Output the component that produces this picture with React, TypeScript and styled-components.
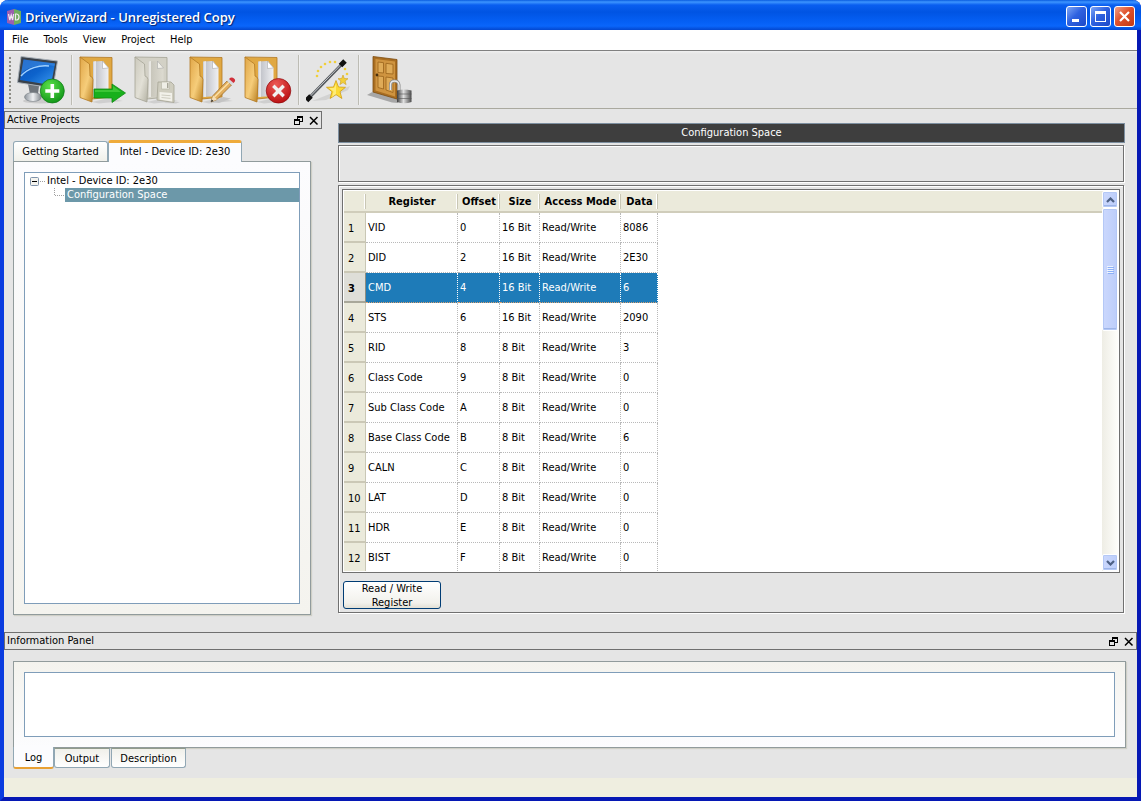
import React from "react";
import styled, { createGlobalStyle, css } from "styled-components";

const Global = createGlobalStyle`
  * { box-sizing: border-box; }
  body {
    margin: 0;
    background: #fff;
    color: #000;
    font: 11px/14px "DejaVu Sans Condensed", "DejaVu Sans", Tahoma, sans-serif;
  }
  button, textarea { font: inherit; color: inherit; }
`;

const Window = styled.div`
  display: flex;
  flex-direction: column;
  height: 100vh;
  min-height: 600px;
  background: #e5e5e5;
  border: solid #0a2fd0;
  border-width: 0 4px 4px;
  border-color: #0a2fd0 #0618b4 #0618b4 #0a3ce0;
  border-radius: 8px 8px 0 0;
`;

const TitleBar = styled.header`
  display: flex;
  flex: none;
  align-items: center;
  gap: 3px;
  height: 30px;
  margin: 0 -4px;
  padding: 3px 6px 0;
  border-radius: 8px 8px 0 0;
  background: linear-gradient(#0a5ce0 0, #3d95ff 2px, #0a5ff0 5px, #0054e3 12px, #0560f5 22px, #0a66fb 26px, #0347cf 30px);
`;

const WindowTitle = styled.h1`
  flex: 1;
  margin: 0;
  color: #fff;
  font: 600 13px/18px "Open Sans", "Noto Sans", sans-serif;
  text-shadow: 1px 1px 1px #06236f;
`;

const CaptionButton = styled.button<{ $close?: boolean }>`
  display: flex;
  align-items: center;
  justify-content: center;
  width: 21px;
  height: 21px;
  padding: 0;
  border: 1px solid #fff;
  border-radius: 3px;
  background: ${(p) =>
    p.$close
      ? "linear-gradient(135deg, #f0a088, #e0512b 45%, #c23a12)"
      : "linear-gradient(135deg, #7ea6f5, #2f62e0 45%, #1c48c8)"};
`;

const MenuBar = styled.nav`
  display: flex;
  flex: none;
  height: 20px;
  background: #fff;
`;

const MenuItem = styled.button`
  padding: 0 7px 0 8px;
  border: 0;
  background: none;
`;

const ToolBar = styled.div`
  display: flex;
  flex: none;
  align-items: center;
  height: 59px;
  padding: 0 5px;
  border-top: 1px solid #808080;
  border-bottom: 1px solid #aaa99f;
  background: linear-gradient(#f0f0f0, #e5e5e5 3px);
`;

const Grip = styled.span`
  width: 2px;
  height: 46px;
  margin-right: 6px;
  background: repeating-linear-gradient(#8d8d86 0 2px, transparent 2px 4px);
`;

const ToolGroup = styled.div`
  display: flex;
  gap: 7px;
`;

const ToolSeparator = styled.span`
  width: 2px;
  height: 50px;
  margin: 0 6px;
  border-left: 1px solid #bdbcb4;
  border-right: 1px solid #efefef;
`;

const ToolButton = styled.button`
  padding: 0;
  border: 0;
  background: none;
  svg { display: block; }
`;

const Workspace = styled.div`
  display: flex;
  flex: 1;
  min-height: 0;
  gap: 16px;
`;

const ProjectsDock = styled.aside`
  display: flex;
  flex: none;
  flex-direction: column;
  width: 318px;
  padding: 2px 0 17px;
`;

const DockTitle = styled.div`
  display: flex;
  flex: none;
  align-items: center;
  gap: 4px;
  height: 18px;
  padding: 0 2px;
  border: 1px solid #6f6f6f;
  h2 { flex: 1; margin: 0; font: inherit; }
`;

const DockButton = styled.button`
  width: 11px;
  height: 12px;
  padding: 0;
  border: 0;
  background: none;
  svg { display: block; }
`;

const TabRow = styled.div`
  display: flex;
  flex: none;
  align-items: flex-end;
  height: 21px;
  margin: 11px 9px 0;
`;

const BottomTabRow = styled(TabRow)`
  align-items: flex-start;
  height: 30px;
  margin: 0 9px;
`;

const Tab = styled.button<{ $width: number; $active?: boolean; $bottom?: boolean }>`
  width: ${(p) => p.$width}px;
  height: 20px;
  padding: 0;
  border: 1px solid #91a7b4;
  background: linear-gradient(#fff, #f0f0ea);
  ${(p) =>
    p.$bottom
      ? css`
          margin-right: 1px;
          border-top-color: #919b8c;
          border-radius: 0 0 3px 3px;
          padding-top: 2px;
          background: linear-gradient(#f0f0ea, #fff);
        `
      : css`
          padding-top: 1px;
          border-bottom: 0;
          border-radius: 3px 3px 0 0;
        `}
  ${(p) =>
    p.$active &&
    (p.$bottom
      ? css`
          height: 22px;
          margin: -1px 0 0;
          border-top: 0;
          border-bottom: 2px solid #e8a033;
          background: #fcfcfe;
        `
      : css`
          position: relative;
          height: 22px;
          margin-bottom: -1px;
          padding: 0 0 2px;
          border-top: 3px solid #efab3c;
          background: #fcfcfe;
        `)}
`;

const TabPanel = styled.section`
  display: flex;
  flex: 1;
  min-height: 0;
  margin: 0 11px 0 9px;
  padding: 10px;
  border: 1px solid #919b9c;
  box-shadow: 1px 1px 1px #cfcfc6;
  background: linear-gradient(#fcfcfe, #f4f3ee);
`;

const Tree = styled.ul`
  flex: 1;
  margin: 0;
  padding: 1px 0 0;
  border: 1px solid #7f9db9;
  background: #fff;
  list-style: none;
  ul { margin: 0; padding: 0 0 0 29px; list-style: none; }
`;

const TreeRow = styled.div`
  display: flex;
  align-items: center;
  height: 14px;
  svg { flex: none; }
`;

const TreeLabel = styled.span<{ $selected?: boolean }>`
  flex: 1;
  padding: 0 2px;
  ${(p) => p.$selected && "background: #6c98a9; color: #fff;"}
`;

const Content = styled.main`
  display: flex;
  flex: 1;
  flex-direction: column;
  min-width: 0;
  padding: 14px 12px 19px 0;
`;

const ContentTitle = styled.h2`
  flex: none;
  height: 20px;
  margin: 0 0 2px;
  border: 1px solid #7d8fa0;
  background: #3e3e3e;
  color: #fff;
  font: inherit;
  line-height: 18px;
  text-align: center;
`;

const Frame = styled.div`
  border: 1px solid #707070;
  box-shadow: 1px 1px 0 #fff, inset 1px 1px 0 #fff;
  margin-right: 1px;
`;

const EmptyFrame = styled(Frame)`
  flex: none;
  height: 37px;
  margin-bottom: 3px;
`;

const RegisterFrame = styled(Frame)`
  display: flex;
  flex: 1;
  flex-direction: column;
  align-items: flex-start;
  min-height: 0;
  padding: 3px;
`;

const TableView = styled.div`
  display: flex;
  flex: 1;
  align-self: stretch;
  min-height: 0;
  padding: 1px;
  border: 1px solid #707070;
  background: #fff;
`;

const TableScroll = styled.div`
  flex: 1;
  min-width: 0;
  overflow: hidden;
`;

const RegisterTable = styled.table`
  width: 100%;
  table-layout: fixed;
  border-collapse: separate;
  border-spacing: 0;
  th, td { padding: 0; white-space: nowrap; overflow: hidden; }
`;

const ColumnHead = styled.th`
  height: 22px;
  padding-top: 2px !important;
  border-bottom: 2px solid #d0cdbb;
  background: linear-gradient(to left, #c9c7b5 1px, #fff 1px 2px, transparent 2px) 0 3px / 100% 15px no-repeat #ebeadb;
  &:last-child { background: #ebeadb; }
`;

const RowHead = styled.th<{ $active?: boolean }>`
  height: 30px;
  padding-top: 3px !important;
  border-right: 1px solid ${(p) => (p.$active ? "#8e8d80" : "#c9c7b5")};
  border-bottom: 2px solid ${(p) => (p.$active ? "#a9a89a" : "#cbc8b6")};
  background: ${(p) => (p.$active ? "#deded8" : "#ebeadb")};
  font-weight: ${(p) => (p.$active ? "bold" : "normal")};
  text-align: left;
  text-indent: 4px;
`;

const Cell = styled.td<{ $selected?: boolean }>`
  border-right: 1px dotted #b9b9b9;
  border-bottom: 1px dotted #b9b9b9;
  text-indent: 2px;
  ${(p) =>
    p.$selected &&
    "background: #1e7bb8; color: #fff; border-right-color: #fff; border-bottom-color: #d8a070;"}
`;

const ScrollBar = styled.div`
  display: flex;
  flex: none;
  flex-direction: column;
  width: 16px;
  background: linear-gradient(to right, #eeede5, #fefefb);
`;

const ScrollPart = styled.button<{ $size: number }>`
  display: flex;
  flex: none;
  align-items: center;
  justify-content: center;
  height: ${(p) => p.$size}px;
  padding: 0;
  border: 1px solid #fff;
  border-radius: 2px;
  box-shadow: inset 0 0 0 1px #b4c8f6, inset 0 -2px 0 #9db5e8;
  background: linear-gradient(to right, #cbd8fd, #bccdfa);
`;

const ScrollGap = styled.span`
  flex: 1;
`;

const ActionButton = styled.button`
  flex: none;
  width: 98px;
  height: 28px;
  margin: 8px 0 0 1px;
  padding: 0 12px;
  overflow: hidden;
  border: 1px solid #003c74;
  border-radius: 3px;
  background: linear-gradient(#fff, #f2f1ec 80%, #e3e0d5);
  line-height: 14px;
`;

const InfoDock = styled.footer`
  flex: none;
`;

const InfoPanel = styled(TabPanel)`
  height: 87px;
  margin-top: 11px;
  background: linear-gradient(#f4f3ee, #fcfcfe);
`;

const LogBox = styled.textarea`
  flex: 1;
  height: 65px;
  padding: 2px;
  border: 1px solid #7f9db9;
  outline: 0;
  background: #fff;
  resize: none;
`;

const StatusBar = styled.div`
  flex: none;
  height: 19px;
  background: #efeee0;
`;

/* ---------- icons ---------- */

const Svg = ({ children, x = 0, width = 48 }: { children: React.ReactNode; x?: number; width?: number }) => (
  <svg width={width} height="48" viewBox={`${x} 0 ${width} 48`} aria-hidden="true">
    {children}
  </svg>
);

const MonitorIcon = () => (
  <Svg>
    <defs>
      <linearGradient id="screen" x1="0" y1="0" x2="1" y2="1">
        <stop offset="0" stopColor="#0a4fb8" />
        <stop offset=".5" stopColor="#0d63cc" />
        <stop offset="1" stopColor="#3b9af0" />
      </linearGradient>
      <radialGradient id="green" cx=".4" cy=".3" r=".8">
        <stop offset="0" stopColor="#5be04a" />
        <stop offset="1" stopColor="#0a8f14" />
      </radialGradient>
      <linearGradient id="stand" x1="0" x2="1">
        <stop offset="0" stopColor="#8d949b" />
        <stop offset=".5" stopColor="#eef0f2" />
        <stop offset="1" stopColor="#7d8389" />
      </linearGradient>
    </defs>
    <ellipse cx="24" cy="45" rx="18" ry="2.500" fill="#cbcbcb" />
    <path d="M11 28 22 30 21 38H13z" fill="#70767c" />
    <ellipse cx="16" cy="41" rx="8.500" ry="4.500" fill="url(#stand)" stroke="#777d83" strokeWidth=".6" />
    <path d="M4 .5 40.500 5 36 32 .5 26.500z" fill="#3a4149" stroke="#a9b1b8" strokeWidth="1" />
    <path d="M6.500 3.500 38 7.500 34 29 3 24z" fill="url(#screen)" />
    <path d="M6.500 3.500 38 7.500 37.500 10C24 7 10 11 4 18z" fill="#4e9ae8" opacity=".45" />
    <path d="M4 20C11 12 22 9 32 10" fill="none" stroke="#9fd0ff" strokeWidth="1.500" />
    <circle cx="35.300" cy="35" r="12" fill="url(#green)" stroke="#0b7a12" strokeWidth=".7" />
    <path d="M35.300 28v14M28.300 35h14" stroke="#fff" strokeWidth="3.600" />
  </Svg>
);

const Folder = ({ id, grey }: { id: string; grey?: boolean }) => {
  const c = grey
    ? { back: "#d3d1c6", dark: "#b3b1a3", mid: "#cbc9bd", light: "#e2e0d6", edge: "#a5a396" }
    : { back: "#e0a842", dark: "#b98022", mid: "#e0a647", light: "#f6cd7a", edge: "#b27a24" };
  return (
    <>
      <defs>
        <linearGradient id={id} x1="0" y1="0" x2="1" y2="1">
          <stop offset="0" stopColor={c.mid} />
          <stop offset=".55" stopColor={c.light} />
          <stop offset="1" stopColor={c.dark} />
        </linearGradient>
        <linearGradient id={id + "p"} x1="0" x2="1">
          <stop offset="0" stopColor={grey ? "#c3c1b6" : "#b9bbc2"} />
          <stop offset="1" stopColor={grey ? "#dddbd1" : "#eff0f3"} />
        </linearGradient>
      </defs>
      <path d="M13 46 30 42 44 45 20 47.500z" fill="#cfcfcf" />
      <path d="M1 1 33 1.500V41L13 43z" fill={c.back} stroke={c.edge} strokeWidth=".8" />
      <path d="M14 5.500 24 5 29.500 12V40L14 41z" fill={`url(#${id}p)`} />
      <path d="M14.500 5.500 17 5V41L14.500 41z" fill="#fff" opacity=".6" />
      <path d="M23.500 5V12.500L29.500 12z" fill={grey ? "#f2f1ea" : "#fff"} stroke="#a8a8a8" strokeWidth=".6" />
      <path d="M1 1 10.500 8 11 20q3 1 3 3.500L13 46 1 41.500z" fill={`url(#${id})`} stroke={c.edge} strokeWidth=".8" />
    </>
  );
};

const OpenIcon = () => (
  <Svg>
    <Folder id="fo" />
    <path d="M15 33H33V28L46.500 37 33 46.500V42H15z" fill="#18b01c" stroke="#118a14" strokeWidth=".8" />
    <path d="M16 34H34V30L42 36H16z" fill="#5fdc50" opacity=".5" />
  </Svg>
);

const SaveIcon = () => (
  <Svg>
    <Folder id="fs" grey />
    <path d="M33 45 46 46 42 47.500 30 47z" fill="#cdcdcd" />
    <path d="M24 26H37L40 29V46.500L23 44z" fill="#cfcdbf" stroke="#a6a496" strokeWidth=".8" />
    <path d="M27.500 26h8v7h-8z" fill="#efeee6" stroke="#b3b1a3" strokeWidth=".6" />
    <path d="M33 27h1.500v5H33z" fill="#a6a496" />
    <path d="M25.500 36 38 37v8.500L25.500 43.500z" fill="#f2f1ea" />
    <path d="M27.500 39l9 .7M27.500 41.500l9 .9" stroke="#bdbbad" strokeWidth=".7" />
  </Svg>
);

const EditIcon = () => (
  <Svg>
    <Folder id="fe" />
    <path d="M24 46 34 41 42 42.500 30 47z" fill="#c4c4c4" />
    <path d="M22 46 24 39.500 38 25 42.500 29 28 43.500z" fill="#e2ad5c" stroke="#8f6220" strokeWidth=".7" />
    <path d="M25.500 41 40 26.500" stroke="#fbe2a8" strokeWidth="1.500" />
    <path d="M22 46 24 39.500 28 43.500z" fill="#f5dfb8" />
    <path d="M22 46 22.700 43.500 24.500 45z" fill="#222" />
    <path d="M38 25 40 23 44.500 27 42.500 29z" fill="#d6d9dc" />
    <path d="M40 23Q42.500 20.500 45 22.500T44.500 27z" fill="#d1303a" />
  </Svg>
);

const CloseProjectIcon = () => (
  <Svg>
    <Folder id="fc" />
    <defs>
      <radialGradient id="red" cx=".4" cy=".25" r=".8">
        <stop offset="0" stopColor="#ec5a56" />
        <stop offset="1" stopColor="#b80d10" />
      </radialGradient>
    </defs>
    <circle cx="34.500" cy="34.800" r="12.300" fill="url(#red)" stroke="#8f0c0e" strokeWidth=".7" />
    <path d="M30.500 31 38.500 39M38.500 31 30.500 39" stroke="#f1f1f1" strokeWidth="3.400" strokeLinecap="square" />
  </Svg>
);

const WandIcon = () => (
  <Svg x={2} width={46}>
    <path d="M8 45 46 30 44 34 22 44z" fill="#d2d2d2" />
    {[
      [13, 20], [14, 15], [17, 11], [21, 8], [26, 6], [31, 6], [41, 13], [43, 18],
    ].map(([x, y]) => (
      <circle key={x} cx={x} cy={y} r="1.300" fill="#f0cf3a" />
    ))}
    <path d="M4 43 40 6" stroke="#55595e" strokeWidth="3" />
    <path d="M4.500 42 39.500 6" stroke="#c3c7cb" strokeWidth="1" />
    <path d="M2.500 44.500 7 40M36.500 9.500 41 5" stroke="#111" strokeWidth="5" />
    <path d="M39 19l1.300 3.500 3.700.2-2.900 2.300 1 3.600-3.100-2-3.100 2 1-3.600-2.900-2.300 3.700-.2z" fill="#f2cf38" stroke="#cf9f1c" strokeWidth=".6" />
    <path d="M32 24.500l2.500 6.500 7 .3-5.500 4.400 1.900 6.800-5.900-3.900-5.900 3.900 1.900-6.800-5.500-4.400 7-.3z" fill="#fbd935" stroke="#d09d14" strokeWidth=".8" />
    <path d="M32 28v10l-4 3 1.500-5.500-4.500-3.500h5z" fill="#fff08a" opacity=".8" />
  </Svg>
);

const ExitIcon = () => (
  <Svg>
    <defs>
      <linearGradient id="lock" x1="0" x2="1">
        <stop offset="0" stopColor="#3d3d3d" />
        <stop offset=".45" stopColor="#e0e0e0" />
        <stop offset="1" stopColor="#4a4a4a" />
      </linearGradient>
    </defs>
    <path d="M1 39 8 35 32 43V47L26 46.500z" fill="#a7a7a7" />
    <path d="M7 .5 31 3.500V43L7 36z" fill="#a96e22" stroke="#7d4c10" strokeWidth=".8" />
    <path d="M9.500 3 29 5.500V40.500L9.500 34.500z" fill="#cf9440" />
    <path d="M12 6 17.500 6.700V17L12 16.500zM20 7.300 27 8.300V18L20 17.500zM12 20 17.500 20.500V33L12 31.500zM20 21 27 22V36.500L20 34z" fill="#dfab58" stroke="#a06a20" strokeWidth=".9" />
    <circle cx="11" cy="19" r="1.400" fill="#4a300c" />
    <path d="M24.500 34V29Q24.500 25 28.500 25T33 29V36" fill="none" stroke="#8b8b8b" strokeWidth="3" />
    <path d="M24.500 34V29Q24.500 25 28.500 25T33 29V36" fill="none" stroke="#e9e9e9" strokeWidth="1.400" />
    <path d="M31 34.500Q38 32.500 45.500 34.500V46Q38 48.500 31 46z" fill="url(#lock)" />
    <path d="M31 38h14.500M31 42.500h14.500" stroke="#555" strokeWidth=".6" />
  </Svg>
);

const AppIcon = () => (
  <svg width="16" height="16" viewBox="0 0 16 16" aria-hidden="true">
    <path d="M1 2 8 0V16L1 14z" fill="#9a5fb0" />
    <path d="M8 0 15 2V14L8 16z" fill="#6fae5e" />
    <path d="M2.500 5 3.800 11 5.200 6 6.600 11 7.600 5M9.500 5v6h1.200q2.300-.5 2.300-3T10.700 5z" fill="none" stroke="#f0eaf2" strokeWidth="1.200" />
  </svg>
);

const DockControls = () => (
  <>
    <DockButton aria-label="Float">
      <svg width="11" height="11" viewBox="0 0 11 11">
        <path d="M4 1h6v2H4zM4 1h1v3H4zM9 1h1v6H9zM7 6h3v1H7zM1 4h6v2H1zM1 4h1v6H1zM6 4h1v6H6zM1 9h6v1H1z" fill="#000" />
      </svg>
    </DockButton>
    <DockButton aria-label="Close">
      <svg width="11" height="11" viewBox="0 0 11 11">
        <path d="M2 2 9.500 9.500M9.500 2 2 9.500" stroke="#000" strokeWidth="1.500" />
      </svg>
    </DockButton>
  </>
);

const Chevron = ({ down }: { down?: boolean }) => (
  <svg width="9" height="6" viewBox="0 0 9 6" aria-hidden="true">
    <path d={down ? "M1 1 4.500 4.500 8 1" : "M1 5 4.500 1.500 8 5"} fill="none" stroke="#4d6185" strokeWidth="2.200" />
  </svg>
);

/* ---------- data ---------- */

const menus = ["File", "Tools", "View", "Project", "Help"];

const registers = [
  ["VID", "0", "16 Bit", "8086"],
  ["DID", "2", "16 Bit", "2E30"],
  ["CMD", "4", "16 Bit", "6"],
  ["STS", "6", "16 Bit", "2090"],
  ["RID", "8", "8 Bit", "3"],
  ["Class Code", "9", "8 Bit", "0"],
  ["Sub Class Code", "A", "8 Bit", "0"],
  ["Base Class Code", "B", "8 Bit", "6"],
  ["CALN", "C", "8 Bit", "0"],
  ["LAT", "D", "8 Bit", "0"],
  ["HDR", "E", "8 Bit", "0"],
  ["BIST", "F", "8 Bit", "0"],
];

const selectedRow = 2;

export default function App() {
  return (
    <>
      <Global />
      <Window>
        <TitleBar>
          <AppIcon />
          <WindowTitle>DriverWizard - Unregistered Copy</WindowTitle>
          <CaptionButton aria-label="Minimize">
            <svg width="13" height="13" viewBox="0 0 13 13"><path d="M2 9h7v3H2z" fill="#fff" /></svg>
          </CaptionButton>
          <CaptionButton aria-label="Maximize">
            <svg width="13" height="13" viewBox="0 0 13 13"><path d="M1 1h11v11H1zM2 4v7h9V4z" fill="#fff" fillRule="evenodd" /></svg>
          </CaptionButton>
          <CaptionButton aria-label="Close" $close>
            <svg width="13" height="13" viewBox="0 0 13 13"><path d="M2 2 11 11M11 2 2 11" stroke="#fff" strokeWidth="2.200" /></svg>
          </CaptionButton>
        </TitleBar>

        <MenuBar>
          {menus.map((m) => (
            <MenuItem key={m}>{m}</MenuItem>
          ))}
        </MenuBar>

        <ToolBar role="toolbar">
          <Grip />
          <ToolGroup>
            <ToolButton aria-label="New project"><MonitorIcon /></ToolButton>
          </ToolGroup>
          <ToolSeparator />
          <ToolGroup>
            <ToolButton aria-label="Open project"><OpenIcon /></ToolButton>
            <ToolButton aria-label="Save project" disabled><SaveIcon /></ToolButton>
            <ToolButton aria-label="Edit project"><EditIcon /></ToolButton>
            <ToolButton aria-label="Close project"><CloseProjectIcon /></ToolButton>
          </ToolGroup>
          <ToolSeparator />
          <ToolGroup>
            <ToolButton aria-label="Generate code"><WandIcon /></ToolButton>
          </ToolGroup>
          <ToolSeparator />
          <ToolGroup>
            <ToolButton aria-label="Exit"><ExitIcon /></ToolButton>
          </ToolGroup>
        </ToolBar>

        <Workspace>
          <ProjectsDock>
            <DockTitle>
              <h2>Active Projects</h2>
              <DockControls />
            </DockTitle>
            <TabRow role="tablist">
              <Tab role="tab" $width={95}>Getting Started</Tab>
              <Tab role="tab" aria-selected $width={134} $active>Intel - Device ID: 2e30</Tab>
            </TabRow>
            <TabPanel role="tabpanel">
              <Tree role="tree">
                <li role="treeitem" aria-expanded>
                  <TreeRow>
                    <svg width="20" height="14" viewBox="0 0 20 14" aria-hidden="true">
                      <rect x="5.500" y="3.500" width="8" height="8" rx="1" fill="#f4f3ee" stroke="#7f93ab" />
                      <path d="M7 7h5v1H7z" fill="#000" />
                      <path d="M15 7.500h5" stroke="#a0a0a0" strokeDasharray="1 1" />
                    </svg>
                    <TreeLabel>Intel - Device ID: 2e30</TreeLabel>
                  </TreeRow>
                  <ul role="group">
                    <li role="treeitem" aria-selected>
                      <TreeRow>
                        <svg width="11" height="14" viewBox="0 0 11 14" aria-hidden="true">
                          <path d="M.5 0V7.500H11" fill="none" stroke="#a0a0a0" strokeDasharray="1 1" />
                        </svg>
                        <TreeLabel $selected>Configuration Space</TreeLabel>
                      </TreeRow>
                    </li>
                  </ul>
                </li>
              </Tree>
            </TabPanel>
          </ProjectsDock>

          <Content>
            <ContentTitle>Configuration Space</ContentTitle>
            <EmptyFrame />
            <RegisterFrame>
              <TableView>
                <TableScroll>
                  <RegisterTable>
                    <colgroup>
                      <col width="22" />
                      <col width="92" />
                      <col width="42" />
                      <col width="40" />
                      <col width="81" />
                      <col width="37" />
                      <col />
                    </colgroup>
                    <thead>
                      <tr>
                        <ColumnHead />
                        <ColumnHead>Register</ColumnHead>
                        <ColumnHead>Offset</ColumnHead>
                        <ColumnHead>Size</ColumnHead>
                        <ColumnHead>Access Mode</ColumnHead>
                        <ColumnHead>Data</ColumnHead>
                        <ColumnHead />
                      </tr>
                    </thead>
                    <tbody>
                      {registers.map(([name, offset, size, data], i) => {
                        const on = i === selectedRow;
                        return (
                          <tr key={name}>
                            <RowHead scope="row" $active={on}>{i + 1}</RowHead>
                            <Cell $selected={on}>{name}</Cell>
                            <Cell $selected={on}>{offset}</Cell>
                            <Cell $selected={on}>{size}</Cell>
                            <Cell $selected={on}>Read/Write</Cell>
                            <Cell $selected={on}>{data}</Cell>
                            <td />
                          </tr>
                        );
                      })}
                    </tbody>
                  </RegisterTable>
                </TableScroll>
                <ScrollBar>
                  <ScrollPart $size={17} aria-label="Scroll up"><Chevron /></ScrollPart>
                  <ScrollPart $size={123} aria-label="Scroll position">
                    <svg width="7" height="8" viewBox="0 0 7 8" aria-hidden="true">
                      <path d="M0 .5h6M0 2.500h6M0 4.500h6M0 6.500h6" stroke="#eef4fe" />
                      <path d="M1 1.500h6M1 3.500h6M1 5.500h6M1 7.500h6" stroke="#8cb0f8" />
                    </svg>
                  </ScrollPart>
                  <ScrollGap />
                  <ScrollPart $size={17} aria-label="Scroll down"><Chevron down /></ScrollPart>
                </ScrollBar>
              </TableView>
              <ActionButton>Read / Write Register</ActionButton>
            </RegisterFrame>
          </Content>
        </Workspace>

        <InfoDock>
          <DockTitle>
            <h2>Information Panel</h2>
            <DockControls />
          </DockTitle>
          <InfoPanel role="tabpanel">
            <LogBox aria-label="Log" readOnly />
          </InfoPanel>
          <BottomTabRow role="tablist">
            <Tab role="tab" aria-selected $width={41} $active $bottom>Log</Tab>
            <Tab role="tab" $width={56} $bottom>Output</Tab>
            <Tab role="tab" $width={75} $bottom>Description</Tab>
          </BottomTabRow>
        </InfoDock>
        <StatusBar />
      </Window>
    </>
  );
}
